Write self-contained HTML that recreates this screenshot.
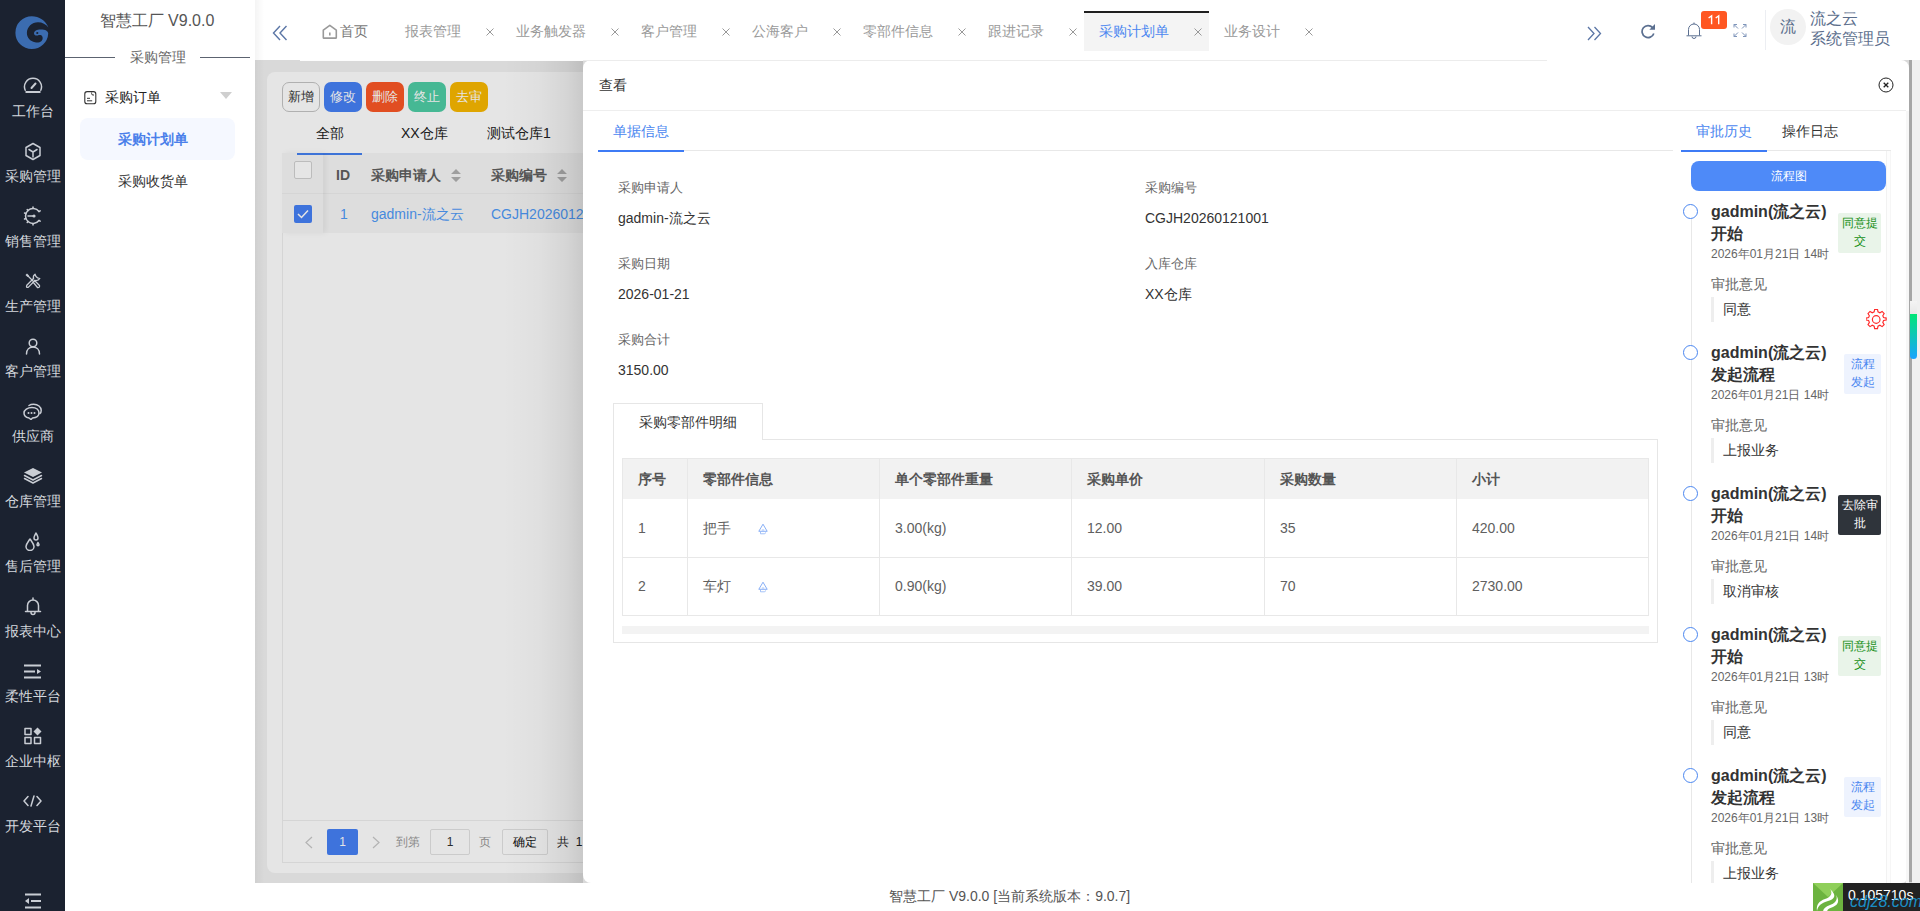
<!DOCTYPE html>
<html><head><meta charset="utf-8">
<style>
*{box-sizing:border-box;margin:0;padding:0}
html,body{width:1920px;height:911px;overflow:hidden;background:#fff;font-family:"Liberation Sans",sans-serif;font-size:14px;color:#333}
.a{position:absolute;white-space:nowrap}
#side{left:0;top:0;width:65px;height:911px;background:#1b2230}
.mi{position:absolute;left:0;width:65px;text-align:center;color:#d4d8de;font-size:14px;line-height:16px}
.ic{position:absolute;left:0;width:65px;display:flex;justify-content:center}
#sub{left:65px;top:0;width:190px;height:911px;background:#fff;box-shadow:1px 0 4px rgba(0,0,0,.08)}
#hdr{left:255px;top:0;width:1665px;height:60px;background:#fff}
.tab{position:absolute;top:1px;height:60px;color:#999;font-size:14px;line-height:60px}
.x{position:absolute;top:28px;width:8px;height:8px}
#main{left:255px;top:60px;width:1665px;height:823px;background:#f2f2f2;overflow:hidden}
#mask{left:255px;top:60px;width:1665px;height:823px;background:rgba(0,0,0,.1)}
#drawer{left:583px;top:60px;width:1326px;height:823px;background:#fff;border-radius:8px;overflow:hidden}
#foot{left:255px;top:883px;width:1665px;height:28px;background:#fff}
</style></head><body>

<!-- left dark sidebar -->
<div id="side" class="a">
  <svg class="a" style="left:12px;top:12px" width="40" height="40" viewBox="0 0 40 40"><path fill="#3b6cb0" d="M36.4 15.4C33.6 8.6 27 4.3 19.8 4.3A16.4 16.4 0 0 0 19.8 37.1A16.4 16.4 0 0 0 36.2 21.5C36.2 18.8 33 17.3 28.5 17.4C25 17.5 22 18.8 22 21.2C22 23.2 24 24 25.8 23.4C27.5 22.8 29.5 22.8 30.3 24.5C31.2 26.5 30.5 29.2 27.5 30.2C26 30.6 24.5 30.6 23 30.3C18.2 29.4 14.9 25.5 14.9 21C14.9 15 20 10.3 26 10.3C30.3 10.3 34 12.3 36.4 15.4Z"/><circle cx="25.3" cy="21" r="1.1" fill="#1b2230"/></svg>
</div>
<div class="a" style="left:0;top:0;width:65px;height:911px">
<div class="ic" style="top:76px;height:20px;align-items:center"><svg width="20" height="17" viewBox="0 0 20 17" style="margin-top:-2px"><path fill="none" stroke="#c9cdd4" stroke-width="1.5" stroke-linecap="round" stroke-linejoin="round" d="M2.2 13.2A8.5 8.5 0 1 1 17.8 13.2"/><path stroke="#c9cdd4" stroke-width="2" d="M2.5 15H17.5"/><path stroke="#c9cdd4" stroke-width="2" stroke-linecap="round" d="M8.5 11L12.5 6.5"/></svg></div><div class="mi" style="top:103px">工作台</div>
<div class="ic" style="top:141px;height:20px;align-items:center"><svg width="18" height="19" viewBox="0 0 18 19"><path fill="none" stroke="#c9cdd4" stroke-width="1.5" stroke-linecap="round" stroke-linejoin="round" d="M9 1.5L16 5.5V13.5L9 17.5L2 13.5V5.5Z"/><path fill="none" stroke="#c9cdd4" stroke-width="1.5" stroke-linecap="round" stroke-linejoin="round" d="M5 7.5L9 10L13 7.5M9 10V15"/></svg></div><div class="mi" style="top:168px">采购管理</div>
<div class="ic" style="top:206px;height:20px;align-items:center"><svg width="20" height="20" viewBox="0 0 20 20"><path fill="none" stroke="#c9cdd4" stroke-width="1.5" stroke-linecap="round" stroke-linejoin="round" d="M16 5.5A7.5 7.5 0 1 0 16 14.5"/><path fill="none" stroke="#c9cdd4" stroke-width="1.5" stroke-linecap="round" stroke-linejoin="round" d="M10 1V2.5M10 17.5V19M4.2 3.5L5 4.6M4.2 16.5L5 15.4M1.5 7L2.8 7.5M1.5 13L2.8 12.5M16 5.5L17.2 4.8M16 14.5L17.2 15.2"/><path fill="none" stroke="#c9cdd4" stroke-width="1.5" stroke-linecap="round" stroke-linejoin="round" d="M5 10H10"/><circle cx="11" cy="10" r="1.6" fill="#c9cdd4"/></svg></div><div class="mi" style="top:233px">销售管理</div>
<div class="ic" style="top:271px;height:20px;align-items:center"><svg width="16" height="16" viewBox="0 0 16 16"><path fill="#c9cdd4" d="M0.5 2L2 0.5L4 2.5L2.5 4Z"/><path fill="none" stroke="#c9cdd4" stroke-width="1.3" stroke-linecap="round" stroke-linejoin="round" d="M3 3L7.5 7.5"/><path fill="none" stroke="#c9cdd4" stroke-width="1.3" stroke-linecap="round" stroke-linejoin="round" d="M8 9L9.5 7.5L14.5 12.5Q15 14.8 12.5 14.5Z"/><path fill="none" stroke="#c9cdd4" stroke-width="1.3" stroke-linecap="round" stroke-linejoin="round" d="M8.5 5.5L1.8 12.2Q0.8 14.8 3.2 14.4L10 7.5"/><path fill="none" stroke="#c9cdd4" stroke-width="1.3" stroke-linecap="round" stroke-linejoin="round" d="M8.5 5.5Q7.8 2.5 10 1.2L11 3.5L12.5 4.8L14.8 5.5Q13.5 7.8 10 7.5"/></svg></div><div class="mi" style="top:298px">生产管理</div>
<div class="ic" style="top:336px;height:20px;align-items:center"><svg width="16" height="17" viewBox="0 0 16 17"><circle fill="none" stroke="#c9cdd4" stroke-width="1.5" stroke-linecap="round" stroke-linejoin="round" cx="8" cy="5" r="3.8"/><path fill="none" stroke="#c9cdd4" stroke-width="1.5" stroke-linecap="round" stroke-linejoin="round" d="M1.5 16C1.5 11.5 4.5 9 8 9S14.5 11.5 14.5 16"/></svg></div><div class="mi" style="top:363px">客户管理</div>
<div class="ic" style="top:401px;height:20px;align-items:center"><svg width="19" height="17" viewBox="0 0 19 17"><path fill="none" stroke="#c9cdd4" stroke-width="1.5" stroke-linecap="round" stroke-linejoin="round" d="M9 4.5C4.5 4.5 1 7 1 10S3.5 14.5 6 15L8 16.5L9.5 15C13 14.8 16 13 16 10S13.5 4.5 9 4.5Z"/><path fill="none" stroke="#c9cdd4" stroke-width="1.5" stroke-linecap="round" stroke-linejoin="round" d="M6 2.5C8 1 13 0.5 16 3S18.5 9 17 10.5"/><circle cx="5.5" cy="10" r="1" fill="#c9cdd4"/><circle cx="8.5" cy="10" r="1" fill="#c9cdd4"/><circle cx="11.5" cy="10" r="1" fill="#c9cdd4"/></svg></div><div class="mi" style="top:428px">供应商</div>
<div class="ic" style="top:466px;height:20px;align-items:center"><svg width="20" height="18" viewBox="0 0 20 18"><path fill="#c9cdd4" d="M10 1L19 5.5L10 10L1 5.5Z"/><path fill="none" stroke="#c9cdd4" stroke-width="1.5" stroke-linecap="round" stroke-linejoin="round" d="M1.5 8.5L10 13L18.5 8.5M1.5 11.5L10 16L18.5 11.5"/></svg></div><div class="mi" style="top:493px">仓库管理</div>
<div class="ic" style="top:531px;height:20px;align-items:center"><svg width="18" height="19" viewBox="0 0 18 19"><path fill="none" stroke="#c9cdd4" stroke-width="1.5" stroke-linecap="round" stroke-linejoin="round" d="M6 7C4 10 2 12 2 14.5A4 4 0 0 0 10 14.5C10 12 8 10 6 7Z"/><path fill="none" stroke="#c9cdd4" stroke-width="1.5" stroke-linecap="round" stroke-linejoin="round" d="M12 1C11 3 10 4.5 10 6A2 2 0 0 0 14 6C14 4.5 13 3 12 1Z"/><path fill="none" stroke="#c9cdd4" stroke-width="1.5" stroke-linecap="round" stroke-linejoin="round" d="M14 10.5C13.5 11.5 13 12 13 12.8A1 1 0 0 0 15 12.8C15 12 14.5 11.5 14 10.5Z"/></svg></div><div class="mi" style="top:558px">售后管理</div>
<div class="ic" style="top:596px;height:20px;align-items:center"><svg width="18" height="19" viewBox="0 0 18 19"><path fill="none" stroke="#c9cdd4" stroke-width="1.5" stroke-linecap="round" stroke-linejoin="round" d="M3.5 14V8.5A5.5 5.5 0 0 1 14.5 8.5V14M1.5 14.5H16.5M7 15.5A2 2 0 0 0 11 15.5M9 1V3"/></svg></div><div class="mi" style="top:623px">报表中心</div>
<div class="ic" style="top:661px;height:20px;align-items:center"><svg width="17" height="15" viewBox="0 0 17 15"><path stroke="#c9cdd4" stroke-width="2" d="M0 1.5H17M0 7.5H11M0 13.5H17"/><path fill="#c9cdd4" d="M13 5L17 7.5L13 10Z"/></svg></div><div class="mi" style="top:688px">柔性平台</div>
<div class="ic" style="top:726px;height:20px;align-items:center"><svg width="18" height="18" viewBox="0 0 18 18"><rect fill="none" stroke="#c9cdd4" stroke-width="1.5" stroke-linecap="round" stroke-linejoin="round" x="1" y="1.5" width="6" height="6"/><rect fill="none" stroke="#c9cdd4" stroke-width="1.5" stroke-linecap="round" stroke-linejoin="round" x="1" y="10.5" width="6" height="6"/><rect fill="none" stroke="#c9cdd4" stroke-width="1.5" stroke-linecap="round" stroke-linejoin="round" x="10.5" y="10.5" width="6" height="6"/><path fill="#c9cdd4" d="M13.5 0.5L17.5 4.5L13.5 8.5L9.5 4.5Z"/></svg></div><div class="mi" style="top:753px">企业中枢</div>
<div class="ic" style="top:791px;height:20px;align-items:center"><svg width="19" height="12" viewBox="0 0 19 12"><path fill="none" stroke="#c9cdd4" stroke-width="1.5" stroke-linecap="round" stroke-linejoin="round" d="M5 1.5L1 6L5 10.5M14 1.5L18 6L14 10.5M11 1L8 11"/></svg></div><div class="mi" style="top:818px">开发平台</div>
<div class="ic" style="top:892px;height:18px;align-items:center"><svg width="18" height="16" viewBox="0 0 18 16"><path stroke="#c9cdd4" stroke-width="2" d="M1 1.5H17M7 8H17M1 14.5H17"/><path fill="#c9cdd4" d="M5 5L1 8L5 11Z"/></svg></div></div>

<!-- secondary sidebar -->
<div id="sub" class="a">
  <div class="a" style="left:-3px;top:11px;width:190px;text-align:center;font-size:16px;line-height:20px;color:#555">智慧工厂 V9.0.0</div>
  <div class="a" style="left:0;top:57px;width:50px;height:1px;background:#5c6370"></div>
  <div class="a" style="left:135px;top:57px;width:50px;height:1px;background:#5c6370"></div>
  <div class="a" style="left:65px;top:49px;width:56px;font-size:14px;line-height:16px;color:#666">采购管理</div>
  <svg class="a" style="left:19px;top:91px" width="13" height="14" viewBox="0 0 13 14"><rect x="0.8" y="0.6" width="11" height="12.2" rx="2.3" fill="none" stroke="#333" stroke-width="1.1"/><path fill="none" stroke="#333" stroke-width="1" d="M7.6 1.5V2.6Q7.6 4 9 4H10"/><path stroke="#333" stroke-width="1" d="M3 7.3H6M3 9.8H8.2"/></svg>
  <div class="a" style="left:40px;top:89px;font-size:14px;line-height:16px;color:#222">采购订单</div>
  <svg class="a" style="left:155px;top:92px" width="12" height="7" viewBox="0 0 12 7"><path fill="#cfcfcf" d="M0 0H12L6 7Z"/></svg>
  <div class="a" style="left:15px;top:118px;width:155px;height:42px;border-radius:8px;background:#f5f8ff"></div>
  <div class="a" style="left:10px;top:131px;width:155px;text-align:center;font-size:14px;line-height:16px;color:#4a7fea;font-weight:bold">采购计划单</div>
  <div class="a" style="left:10px;top:173px;width:155px;text-align:center;font-size:14px;line-height:16px;color:#333">采购收货单</div>
</div>

<!-- header -->
<div id="hdr" class="a">
<svg class="a" style="left:17px;top:25px" width="16" height="16" viewBox="0 0 16 16"><path fill="none" stroke="#5b76a6" stroke-width="1.4" d="M8 1L1.5 8L8 15M14.5 1L8 8L14.5 15"/></svg>
<svg class="a" style="left:67px;top:24px" width="16" height="16" viewBox="0 0 16 16"><path fill="none" stroke="#999" stroke-width="1.6" stroke-linejoin="round" d="M1.3 6.2L7.8 1.4L14.3 6.2V13.6Q14.3 14.3 13.6 14.3H2Q1.3 14.3 1.3 13.6Z"/><path stroke="#999" stroke-width="1" d="M1.5 14H14"/><path stroke="#999" stroke-width="1.6" d="M7.8 8.5V11.5"/></svg>
<div class="tab" style="left:85px;color:#777">首页</div>
<div class="tab" style="left:149.60000000000002px">报表管理</div>
<svg class="x" style="margin-left:-1px;left:231.60000000000002px" width="8" height="8" viewBox="0 0 8 8"><path stroke="#999" stroke-width="1" d="M0.5 0.5L7.5 7.5M7.5 0.5L0.5 7.5"/></svg>
<div class="tab" style="left:261px">业务触发器</div>
<svg class="x" style="margin-left:-1px;left:357px" width="8" height="8" viewBox="0 0 8 8"><path stroke="#999" stroke-width="1" d="M0.5 0.5L7.5 7.5M7.5 0.5L0.5 7.5"/></svg>
<div class="tab" style="left:386px">客户管理</div>
<svg class="x" style="margin-left:-1px;left:468px" width="8" height="8" viewBox="0 0 8 8"><path stroke="#999" stroke-width="1" d="M0.5 0.5L7.5 7.5M7.5 0.5L0.5 7.5"/></svg>
<div class="tab" style="left:497px">公海客户</div>
<svg class="x" style="margin-left:-1px;left:579px" width="8" height="8" viewBox="0 0 8 8"><path stroke="#999" stroke-width="1" d="M0.5 0.5L7.5 7.5M7.5 0.5L0.5 7.5"/></svg>
<div class="tab" style="left:608px">零部件信息</div>
<svg class="x" style="margin-left:-1px;left:704px" width="8" height="8" viewBox="0 0 8 8"><path stroke="#999" stroke-width="1" d="M0.5 0.5L7.5 7.5M7.5 0.5L0.5 7.5"/></svg>
<div class="tab" style="left:733px">跟进记录</div>
<svg class="x" style="margin-left:-1px;left:815px" width="8" height="8" viewBox="0 0 8 8"><path stroke="#999" stroke-width="1" d="M0.5 0.5L7.5 7.5M7.5 0.5L0.5 7.5"/></svg>
<div class="a" style="left:829px;top:11px;width:125px;height:40px;background:#f4f4f4;border-top:2px solid #1f1f1f"></div>
<div class="tab" style="left:844px;color:#4a86f0">采购计划单</div>
<svg class="x" style="margin-left:-1px;left:940px" width="8" height="8" viewBox="0 0 8 8"><path stroke="#999" stroke-width="1" d="M0.5 0.5L7.5 7.5M7.5 0.5L0.5 7.5"/></svg>
<div class="tab" style="left:969px">业务设计</div>
<svg class="x" style="margin-left:-1px;left:1051px" width="8" height="8" viewBox="0 0 8 8"><path stroke="#999" stroke-width="1" d="M0.5 0.5L7.5 7.5M7.5 0.5L0.5 7.5"/></svg>
<div class="a" style="left:0;top:60px;width:1292px;height:1px;background:#eee"></div>
<svg class="a" style="left:1332px;top:26px" width="15" height="15" viewBox="0 0 15 15"><path fill="none" stroke="#5b76a6" stroke-width="1.3" d="M1 1L7 7.5L1 14M7.5 1L13.5 7.5L7.5 14"/></svg>
<svg class="a" style="left:1385px;top:23px" width="16" height="16" viewBox="0 0 16 16"><path fill="none" stroke="#5b6f90" stroke-width="1.7" d="M12.6 4.6A6 6 0 1 0 13.8 10.4"/><path fill="#5b6f90" d="M15 1V6.8H9.3Z"/></svg>
<svg class="a" style="left:1431px;top:22px" width="16" height="17" viewBox="0 0 16 17"><path fill="none" stroke="#5b6f90" stroke-width="1" d="M2.5 13.5V7.5A5.5 5.5 0 0 1 13.5 7.5V13.5M0.5 13.8H15.5M6 14.5A2 2 0 0 0 10 14.5M8 0.5V2"/></svg>
<div class="a" style="left:1446px;top:11px;width:26px;height:18px;border-radius:3px;background:#ff5722"></div><svg class="a" style="left:1451px;top:14px" width="16" height="11" viewBox="0 0 16 11"><path fill="none" stroke="#fff" stroke-width="1.4" d="M2.6 4L5.6 1.9V10.2M9.7 4L12.7 1.9V10.2"/></svg>
<svg class="a" style="left:1478px;top:23px" width="14" height="15" viewBox="0 0 14 15"><path fill="none" stroke="#7f95ba" stroke-width="1" d="M1 4.5V1.5H4M1 1.5L5 5.5M10 1.5H13V4.5M13 1.5L9 5.5M1 10.5V13.5H4M1 13.5L5 9.5M13 10.5V13.5H10M13 13.5L9 9.5"/></svg>
<div class="a" style="left:1510px;top:10px;width:1px;height:40px;background:#eceef2"></div>
<div class="a" style="left:1515px;top:9px;width:36px;height:36px;border-radius:50%;background:#f2f2f2;color:#5b6e8c;font-size:16px;line-height:36px;text-align:center">流</div>
<div class="a" style="left:1555px;top:9px;font-size:16px;line-height:20px;color:#5b6e8c">流之云<br>系统管理员</div>
</div>

<!-- main content -->
<div id="main" class="a">
<div class="a" style="left:12px;top:12px;width:1640px;height:801px;background:#fff;border-radius:8px"></div>
<div class="a" style="left:27px;top:22px;width:38px;height:30px;border-radius:7px;border:1px solid #c4c4c4;background:#fff;color:#333;font-size:13px;line-height:28px;text-align:center"></div><div class="a" style="left:27px;top:22px;width:38px;line-height:30px;text-align:center;font-size:13px;color:#333">新增</div>
<div class="a" style="left:69px;top:22px;width:38px;height:30px;border-radius:7px;background:#4680f5;border:none;color:#fff;font-size:13px;line-height:30px;text-align:center">修改</div>
<div class="a" style="left:111px;top:22px;width:38px;height:30px;border-radius:7px;background:#fb5725;border:none;color:#fff;font-size:13px;line-height:30px;text-align:center">删除</div>
<div class="a" style="left:153px;top:22px;width:38px;height:30px;border-radius:7px;background:#4fcda5;border:none;color:#fff;font-size:13px;line-height:30px;text-align:center">终止</div>
<div class="a" style="left:195px;top:22px;width:38px;height:30px;border-radius:7px;background:#f9b800;border:none;color:#fff;font-size:13px;line-height:30px;text-align:center">去审</div>
<div class="a" style="left:61px;top:65px;font-size:14px;line-height:16px;color:#222">全部</div>
<div class="a" style="left:146px;top:65px;font-size:14px;line-height:16px;color:#222">XX仓库</div>
<div class="a" style="left:232px;top:65px;font-size:14px;line-height:16px;color:#222">测试仓库1</div>
<div class="a" style="left:27px;top:93px;width:1620px;height:670px;border:1px solid #eee;border-top:none;border-bottom:none"></div>
<div class="a" style="left:27px;top:93px;width:1620px;height:41px;background:#f7f7f7;border-bottom:1px solid #eee"></div>
<div class="a" style="left:27px;top:134px;width:1620px;height:39px;background:#f7f7f7"></div>
<div class="a" style="left:42px;top:93px;width:65px;height:2px;background:#4480f0"></div>
<div class="a" style="left:27px;top:93px;width:41px;height:80px;box-shadow:3px 0 6px rgba(0,0,0,.06)"></div>
<div class="a" style="left:39px;top:101px;width:18px;height:18px;border:1px solid #d2d2d2;border-radius:2px;background:#fff"></div>
<div class="a" style="left:39px;top:145px;width:18px;height:18px;border-radius:2px;background:#4680f5"></div>
<svg class="a" style="left:42px;top:149px" width="12" height="10" viewBox="0 0 12 10"><path fill="none" stroke="#fff" stroke-width="1.5" d="M1 5L4.5 8.5L11 1.5"/></svg>
<div class="a" style="left:81px;top:107px;font-size:14px;line-height:16px;color:#5f5f5f;font-weight:bold">ID</div>
<div class="a" style="left:116px;top:107px;font-size:14px;line-height:16px;color:#5f5f5f;font-weight:bold">采购申请人</div>
<svg class="a" style="left:196px;top:109px" width="10" height="13" viewBox="0 0 10 13"><path fill="#b0b0b0" d="M5 0L10 5H0ZM0 8H10L5 13Z"/></svg>
<div class="a" style="left:236px;top:107px;font-size:14px;line-height:16px;color:#5f5f5f;font-weight:bold">采购编号</div>
<svg class="a" style="left:302px;top:109px" width="10" height="13" viewBox="0 0 10 13"><path fill="#b0b0b0" d="M5 0L10 5H0ZM0 8H10L5 13Z"/></svg>
<div class="a" style="left:85px;top:146px;font-size:14px;line-height:16px;color:#4f9af8">1</div>
<div class="a" style="left:116px;top:146px;font-size:14px;line-height:16px;color:#4f9af8">gadmin-流之云</div>
<div class="a" style="left:236px;top:146px;font-size:14px;line-height:16px;color:#4f9af8">CGJH20260121001</div>
<div class="a" style="left:27px;top:760px;width:1620px;height:43px;border:1px solid #eee"></div>
<svg class="a" style="left:49px;top:776px" width="9" height="13" viewBox="0 0 9 13"><path fill="none" stroke="#c8c8c8" stroke-width="1.2" d="M8 1L2 6.5L8 12"/></svg>
<div class="a" style="left:72px;top:769px;width:31px;height:26px;border-radius:2px;background:#4680f5;color:#fff;font-size:12px;line-height:26px;text-align:center">1</div>
<svg class="a" style="left:117px;top:776px" width="9" height="13" viewBox="0 0 9 13"><path fill="none" stroke="#c8c8c8" stroke-width="1.2" d="M1 1L7 6.5L1 12"/></svg>
<div class="a" style="left:141px;top:775px;font-size:12px;line-height:14px;color:#999">到第</div>
<div class="a" style="left:175px;top:769px;width:40px;height:26px;border:1px solid #e2e2e2;border-radius:2px;color:#333;font-size:12px;line-height:24px;text-align:center">1</div>
<div class="a" style="left:224px;top:775px;font-size:12px;line-height:14px;color:#999">页</div>
<div class="a" style="left:247px;top:769px;width:46px;height:26px;border:1px solid #e2e2e2;border-radius:2px;color:#111;font-size:12px;line-height:24px;text-align:center">确定</div>
<div class="a" style="left:302px;top:775px;font-size:12px;line-height:14px;color:#222">共 &nbsp;1 条</div>
</div>
<div class="a" style="left:255px;top:0;width:9px;height:883px;background:linear-gradient(to right,rgba(0,0,0,.045),rgba(0,0,0,0))"></div>
<div id="mask" class="a"></div>

<!-- drawer -->
<div class="a" style="left:503px;top:60px;width:80px;height:823px;background:linear-gradient(to right,rgba(0,0,0,0) 0,rgba(0,0,0,.025) 45%,rgba(0,0,0,.07) 80%,rgba(0,0,0,.12) 100%)"></div>
<div id="drawer" class="a">
<div class="a" style="left:16px;top:17px;font-size:14px;line-height:16px;color:#333;">查看</div>
<svg class="a" style="left:1295px;top:17px" width="16" height="16" viewBox="0 0 16 16"><circle cx="8" cy="8" r="7" fill="none" stroke="#222" stroke-width="1"/><path stroke="#222" stroke-width="1.3" d="M5.7 5.7L10.3 10.3M10.3 5.7L5.7 10.3"/></svg>
<div class="a" style="left:0;top:50px;width:1323px;height:1px;background:#eee"></div>
<div class="a" style="left:30px;top:63px;font-size:14px;line-height:16px;color:#4a86f0;">单据信息</div>
<div class="a" style="left:15px;top:90px;width:1075px;height:1px;background:#e8e8e8"></div>
<div class="a" style="left:15px;top:90px;width:86px;height:2px;background:#3e7bf5"></div>
<div class="a" style="left:35px;top:120px;font-size:13px;line-height:15px;color:#666;">采购申请人</div>
<div class="a" style="left:35px;top:150px;font-size:14px;line-height:16px;color:#333;">gadmin-流之云</div>
<div class="a" style="left:562px;top:120px;font-size:13px;line-height:15px;color:#666;">采购编号</div>
<div class="a" style="left:562px;top:150px;font-size:14px;line-height:16px;color:#333;">CGJH20260121001</div>
<div class="a" style="left:35px;top:196px;font-size:13px;line-height:15px;color:#666;">采购日期</div>
<div class="a" style="left:35px;top:226px;font-size:14px;line-height:16px;color:#333;">2026-01-21</div>
<div class="a" style="left:562px;top:196px;font-size:13px;line-height:15px;color:#666;">入库仓库</div>
<div class="a" style="left:562px;top:226px;font-size:14px;line-height:16px;color:#333;">XX仓库</div>
<div class="a" style="left:35px;top:272px;font-size:13px;line-height:15px;color:#666;">采购合计</div>
<div class="a" style="left:35px;top:302px;font-size:14px;line-height:16px;color:#333;">3150.00</div>
<div class="a" style="left:30px;top:379px;width:1045px;height:204px;border:1px solid #e6e6e6;border-top:none"></div>
<div class="a" style="left:180px;top:379px;width:895px;height:1px;background:#e6e6e6"></div>
<div class="a" style="left:30px;top:343px;width:150px;height:37px;border:1px solid #e6e6e6;border-bottom:none;background:#fff"></div>
<div class="a" style="left:56px;top:354px;font-size:14px;line-height:16px;color:#333;">采购零部件明细</div>
<div class="a" style="left:39px;top:398px;width:1027px;height:41px;background:#f2f2f2"></div>
<div class="a" style="left:39px;top:398px;width:1027px;height:158px;border:1px solid #e8e8e8"></div>
<div class="a" style="left:39px;top:497px;width:1027px;height:1px;background:#e8e8e8"></div>
<div class="a" style="left:104px;top:398px;width:1px;height:158px;background:#e8e8e8"></div>
<div class="a" style="left:296px;top:398px;width:1px;height:158px;background:#e8e8e8"></div>
<div class="a" style="left:488px;top:398px;width:1px;height:158px;background:#e8e8e8"></div>
<div class="a" style="left:681px;top:398px;width:1px;height:158px;background:#e8e8e8"></div>
<div class="a" style="left:873px;top:398px;width:1px;height:158px;background:#e8e8e8"></div>
<div class="a" style="left:55px;top:411px;font-size:14px;line-height:16px;color:#555;font-weight:bold">序号</div>
<div class="a" style="left:120px;top:411px;font-size:14px;line-height:16px;color:#555;font-weight:bold">零部件信息</div>
<div class="a" style="left:312px;top:411px;font-size:14px;line-height:16px;color:#555;font-weight:bold">单个零部件重量</div>
<div class="a" style="left:504px;top:411px;font-size:14px;line-height:16px;color:#555;font-weight:bold">采购单价</div>
<div class="a" style="left:697px;top:411px;font-size:14px;line-height:16px;color:#555;font-weight:bold">采购数量</div>
<div class="a" style="left:889px;top:411px;font-size:14px;line-height:16px;color:#555;font-weight:bold">小计</div>
<div class="a" style="left:55px;top:460px;font-size:14px;line-height:16px;color:#606060;">1</div>
<div class="a" style="left:120px;top:460px;font-size:14px;line-height:16px;color:#606060;">把手</div>
<div class="a" style="left:312px;top:460px;font-size:14px;line-height:16px;color:#606060;">3.00(kg)</div>
<div class="a" style="left:504px;top:460px;font-size:14px;line-height:16px;color:#606060;">12.00</div>
<div class="a" style="left:697px;top:460px;font-size:14px;line-height:16px;color:#606060;">35</div>
<div class="a" style="left:889px;top:460px;font-size:14px;line-height:16px;color:#606060;">420.00</div>
<svg class="a" style="left:175px;top:463px" width="10" height="12" viewBox="0 0 10 12"><path fill="none" stroke="#7aa6f5" stroke-width="0.9" d="M5 1.2L9.2 8.3H0.8Z"/><path fill="none" stroke="#9bbcf8" stroke-width="0.9" d="M2.5 8.5V10.8H6.3Q7.6 10.8 7.6 9.4M3.8 7H6.2"/></svg>
<div class="a" style="left:55px;top:518px;font-size:14px;line-height:16px;color:#606060;">2</div>
<div class="a" style="left:120px;top:518px;font-size:14px;line-height:16px;color:#606060;">车灯</div>
<div class="a" style="left:312px;top:518px;font-size:14px;line-height:16px;color:#606060;">0.90(kg)</div>
<div class="a" style="left:504px;top:518px;font-size:14px;line-height:16px;color:#606060;">39.00</div>
<div class="a" style="left:697px;top:518px;font-size:14px;line-height:16px;color:#606060;">70</div>
<div class="a" style="left:889px;top:518px;font-size:14px;line-height:16px;color:#606060;">2730.00</div>
<svg class="a" style="left:175px;top:521px" width="10" height="12" viewBox="0 0 10 12"><path fill="none" stroke="#7aa6f5" stroke-width="0.9" d="M5 1.2L9.2 8.3H0.8Z"/><path fill="none" stroke="#9bbcf8" stroke-width="0.9" d="M2.5 8.5V10.8H6.3Q7.6 10.8 7.6 9.4M3.8 7H6.2"/></svg>
<div class="a" style="left:39px;top:566px;width:1027px;height:8px;background:#f3f3f3"></div>
<div class="a" style="left:1113px;top:63px;font-size:14px;line-height:16px;color:#4a86f0;">审批历史</div>
<div class="a" style="left:1199px;top:63px;font-size:14px;line-height:16px;color:#333;">操作日志</div>
<div class="a" style="left:1098px;top:90px;width:210px;height:1px;background:#e8e8e8"></div>
<div class="a" style="left:1098px;top:90px;width:86px;height:2px;background:#3e7bf5"></div>
<div class="a" style="left:1303px;top:91px;width:5px;height:732px;border-left:1px solid #f2f2f2;border-right:1px solid #f6f6f6;background:#fdfdfd"></div>
<div class="a" style="left:1108px;top:101px;width:195px;height:30px;border-radius:8px;background:#4e8af8;color:#fff;font-size:12px;line-height:30px;text-align:center">流程图</div>
<div class="a" style="left:1098px;top:132px;width:210px;height:691px;overflow:hidden"><div class="a" style="left:-1098px;top:-132px;width:1326px;height:823px"><div class="a" style="left:1100px;top:144px;width:15px;height:15px;border-radius:50%;border:1.5px solid #4a86f0;background:#fff"></div>
<div class="a" style="left:1108px;top:159px;width:1px;height:126px;background:#e8e8e8"></div>
<div class="a" style="left:1128px;top:141px;font-size:16px;line-height:18px;color:#333;font-weight:bold;line-height:22px">gadmin(流之云)<br>开始</div>
<div class="a" style="left:1128px;top:187px;font-size:12px;line-height:14px;color:#666;">2026年01月21日 14时</div>
<div class="a" style="left:1128px;top:216px;font-size:14px;line-height:16px;color:#666;">审批意见</div>
<div class="a" style="left:1128px;top:237px;width:3px;height:25px;background:#eee"></div>
<div class="a" style="left:1140px;top:241px;font-size:14px;line-height:16px;color:#333;">同意</div>
<div class="a" style="left:1255px;top:153px;width:43px;height:40px;border-radius:2px;background:#e9f4e9;color:#189018;font-size:12px;line-height:18px;text-align:center;padding-top:1px">同意提<br>交</div>
<div class="a" style="left:1100px;top:285px;width:15px;height:15px;border-radius:50%;border:1.5px solid #4a86f0;background:#fff"></div>
<div class="a" style="left:1108px;top:300px;width:1px;height:126px;background:#e8e8e8"></div>
<div class="a" style="left:1128px;top:282px;font-size:16px;line-height:18px;color:#333;font-weight:bold;line-height:22px">gadmin(流之云)<br>发起流程</div>
<div class="a" style="left:1128px;top:328px;font-size:12px;line-height:14px;color:#666;">2026年01月21日 14时</div>
<div class="a" style="left:1128px;top:357px;font-size:14px;line-height:16px;color:#666;">审批意见</div>
<div class="a" style="left:1128px;top:378px;width:3px;height:25px;background:#eee"></div>
<div class="a" style="left:1140px;top:382px;font-size:14px;line-height:16px;color:#333;">上报业务</div>
<div class="a" style="left:1261px;top:294px;width:37px;height:40px;border-radius:2px;background:#eef3fe;color:#4a86f0;font-size:12px;line-height:18px;text-align:center;padding-top:1px">流程<br>发起</div>
<div class="a" style="left:1100px;top:426px;width:15px;height:15px;border-radius:50%;border:1.5px solid #4a86f0;background:#fff"></div>
<div class="a" style="left:1108px;top:441px;width:1px;height:126px;background:#e8e8e8"></div>
<div class="a" style="left:1128px;top:423px;font-size:16px;line-height:18px;color:#333;font-weight:bold;line-height:22px">gadmin(流之云)<br>开始</div>
<div class="a" style="left:1128px;top:469px;font-size:12px;line-height:14px;color:#666;">2026年01月21日 14时</div>
<div class="a" style="left:1128px;top:498px;font-size:14px;line-height:16px;color:#666;">审批意见</div>
<div class="a" style="left:1128px;top:519px;width:3px;height:25px;background:#eee"></div>
<div class="a" style="left:1140px;top:523px;font-size:14px;line-height:16px;color:#333;">取消审核</div>
<div class="a" style="left:1255px;top:435px;width:43px;height:40px;border-radius:2px;background:#2f343b;color:#fff;font-size:12px;line-height:18px;text-align:center;padding-top:1px">去除审<br>批</div>
<div class="a" style="left:1100px;top:567px;width:15px;height:15px;border-radius:50%;border:1.5px solid #4a86f0;background:#fff"></div>
<div class="a" style="left:1108px;top:582px;width:1px;height:126px;background:#e8e8e8"></div>
<div class="a" style="left:1128px;top:564px;font-size:16px;line-height:18px;color:#333;font-weight:bold;line-height:22px">gadmin(流之云)<br>开始</div>
<div class="a" style="left:1128px;top:610px;font-size:12px;line-height:14px;color:#666;">2026年01月21日 13时</div>
<div class="a" style="left:1128px;top:639px;font-size:14px;line-height:16px;color:#666;">审批意见</div>
<div class="a" style="left:1128px;top:660px;width:3px;height:25px;background:#eee"></div>
<div class="a" style="left:1140px;top:664px;font-size:14px;line-height:16px;color:#333;">同意</div>
<div class="a" style="left:1255px;top:576px;width:43px;height:40px;border-radius:2px;background:#e9f4e9;color:#189018;font-size:12px;line-height:18px;text-align:center;padding-top:1px">同意提<br>交</div>
<div class="a" style="left:1100px;top:708px;width:15px;height:15px;border-radius:50%;border:1.5px solid #4a86f0;background:#fff"></div>
<div class="a" style="left:1108px;top:723px;width:1px;height:126px;background:#e8e8e8"></div>
<div class="a" style="left:1128px;top:705px;font-size:16px;line-height:18px;color:#333;font-weight:bold;line-height:22px">gadmin(流之云)<br>发起流程</div>
<div class="a" style="left:1128px;top:751px;font-size:12px;line-height:14px;color:#666;">2026年01月21日 13时</div>
<div class="a" style="left:1128px;top:780px;font-size:14px;line-height:16px;color:#666;">审批意见</div>
<div class="a" style="left:1128px;top:801px;width:3px;height:25px;background:#eee"></div>
<div class="a" style="left:1140px;top:805px;font-size:14px;line-height:16px;color:#333;">上报业务</div>
<div class="a" style="left:1261px;top:717px;width:37px;height:40px;border-radius:2px;background:#eef3fe;color:#4a86f0;font-size:12px;line-height:18px;text-align:center;padding-top:1px">流程<br>发起</div>
</div></div>
<svg class="a" style="left:1283px;top:249px" width="21" height="21" viewBox="0 0 21 21"><path fill="none" stroke="#ff2a2a" stroke-width="1.2" d="M9 1.5H12L12.5 4L14.5 5L16.8 3.6L18.9 5.7L17.5 8L18.3 10L21 10.5V12.5L18.3 13L17.5 15L18.9 17.3L16.8 19.4L14.5 18L12.5 19L12 21.5H9L8.5 19L6.5 18L4.2 19.4L2.1 17.3L3.5 15L2.7 13L0 12.5V10.5L2.7 10L3.5 8L2.1 5.7L4.2 3.6L6.5 5L8.5 4Z" transform="translate(0,-1) scale(0.96)"/><circle cx="10.2" cy="10.5" r="3.8" fill="none" stroke="#ff2a2a" stroke-width="1.2"/></svg>

</div>

<div class="a" style="left:300px;top:60px;width:283px;height:1px;background:#fdfdfd"></div>
<div class="a" style="left:583px;top:60px;width:964px;height:1px;background:#ececec"></div>
<!-- footer -->
<div id="foot" class="a"><div class="a" style="left:634px;top:4px;font-size:14px;line-height:18px;color:#555">智慧工厂 V9.0.0 [当前系统版本：9.0.7]</div></div>
<div class="a" style="left:1906px;top:111px;width:3px;height:772px;background:#f7f7f7"></div>
<div class="a" style="left:1909px;top:60px;width:3px;height:822px;background:#a6a6a6"></div>
<div class="a" style="left:1912px;top:60px;width:8px;height:823px;background:#f0f0f0"></div>
<div class="a" style="left:1910px;top:301px;width:7px;height:58px;border-radius:0 0 4px 4px;background:linear-gradient(#f4f4f4 0,#e8e8e8 13px,#00e676 13px,#1aa3ff 100%)"></div>

<div class="a" style="left:1813px;top:883px;width:30px;height:28px;background:#6cb33f;overflow:hidden">
<svg width="30" height="29" viewBox="0 0 30 29"><path fill="#8fcf5a" d="M0 0H30L15 14Z"/><path fill="#fff" d="M17 6C20 10 18 14 12 16C6 18 3 22 4 28C5 22 9 20 15 18C22 16 24 12 17 6Z"/><path fill="#fff" d="M23 12C25 16 23 20 17 22C12 24 10 26 10 29H14C14 26 17 25 20 24C25 22 27 18 23 12Z"/></svg>
</div>
<div class="a" style="left:1843px;top:883px;width:77px;height:28px;background:#222"></div>
<div class="a" style="left:1848px;top:887px;font-size:14px;line-height:16px;color:#fff">0.105710s</div>
<div class="a" style="left:1850px;top:893px;font-size:16px;line-height:18px;color:#1b9ad6;font-style:italic;opacity:.9">cdjz8.com</div>


</body></html>
